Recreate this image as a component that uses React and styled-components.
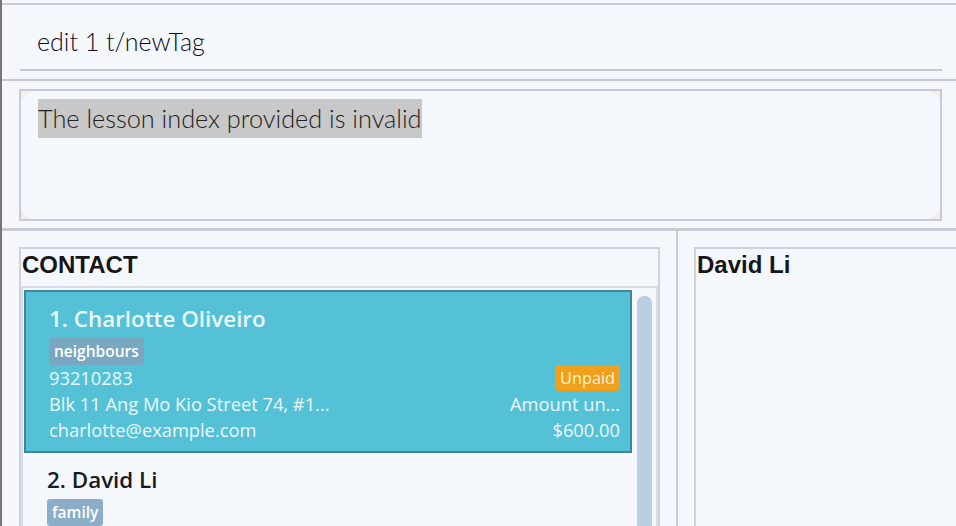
import styled, { createGlobalStyle } from 'styled-components';

const GlobalStyle = createGlobalStyle`
  html, body {
    margin: 0;
    padding: 0;
    background: #f4f8fc;
  }
  body {
    font-family: "Open Sans", "Noto Sans", sans-serif;
  }
`;

const Window = styled.div`
  width: 956px;
  height: 526px;
  box-sizing: border-box;
  overflow: hidden;
  display: flex;
  flex-direction: column;
  padding-top: 3px;
  background: #f4f8fc;
  border-left: 2px solid #767676;
`;

const CommandBar = styled.div`
  flex: none;
  height: 78px;
  box-sizing: border-box;
  border-top: 2px solid #c8cad6;
  border-bottom: 2px solid #c4c7d3;
  padding: 0 14px 0 18px;
`;

const CommandField = styled.div`
  height: 66px;
  box-sizing: border-box;
  padding: 21px 0 0 17px;
  border-bottom: 2px solid #c6c9d5;
  font-family: Lato, "Open Sans", sans-serif;
  font-weight: 300;
  font-size: 25px;
  line-height: 30px;
  color: #0c0c1c;
`;

const ResultBar = styled.div`
  flex: none;
  height: 150px;
  box-sizing: border-box;
  padding: 8px 14px 0 17px;
  border-bottom: 3px solid #c8cad6;
`;

const ResultBox = styled.div`
  height: 132px;
  box-sizing: border-box;
  border: 2px solid #c8cbd7;
  background: #efefef;
`;

const ResultArea = styled.div`
  height: 100%;
  box-sizing: border-box;
  border-radius: 14px;
  background: #f4f8fc;
  padding: 8px 17px;
`;

const Highlight = styled.span`
  display: inline-block;
  height: 39px;
  line-height: 39px;
  background: #c8c8c8;
  font-family: Lato, "Open Sans", sans-serif;
  font-weight: 300;
  font-size: 25.3px;
  color: #222;
`;

const Bottom = styled.div`
  flex: none;
  height: 330px;
  display: flex;
`;

const LeftPane = styled.div`
  width: 676px;
  flex: none;
  box-sizing: border-box;
  padding: 16px 16px 0 17px;
  border-right: 2px solid #c8cbd7;
`;

const RightPane = styled.div`
  flex: 1;
  overflow: hidden;
  padding: 16px 0 0 16px;
`;

const Panel = styled.div`
  box-sizing: border-box;
  height: 100%;
  width: ${(p) => p.$width || 'auto'};
  border: 2px solid #cfd2dd;
  border-bottom: none;
  display: flex;
  flex-direction: column;
`;

const PanelTitle = styled.div`
  flex: none;
  height: 37px;
  box-sizing: border-box;
  padding: 2px 0 0 1px;
  font-family: "Liberation Sans", Arial, sans-serif;
  font-weight: 700;
  font-size: 24px;
  line-height: 28px;
  color: #161616;
`;

const List = styled.div`
  flex: 1;
  display: flex;
  border: 2px solid #d8dbe4;
  border-bottom: none;
  padding: 2px 0 0 1px;
  overflow: hidden;
`;

const Cards = styled.div`
  flex: 1;
  display: flex;
  flex-direction: column;
`;

const ScrollThumb = styled.div`
  flex: none;
  width: 15px;
  margin: 6px 4px 0 5px;
  border-radius: 7px 7px 0 0;
  background: #bacfdf;
`;

const Card = styled.div`
  box-sizing: border-box;
  padding: 12px 10px 8px 23px;
  border: ${(p) => (p.$selected ? '2px solid #3f8599' : 'none')};
  background: ${(p) => (p.$selected ? '#55c1d6' : 'transparent')};
  color: ${(p) => (p.$selected ? '#eaf8fb' : '#1b1b1b')};
`;

const Name = styled.div`
  font-size: 22.4px;
  font-weight: 600;
  line-height: 30px;
`;

const Tag = styled.span`
  display: inline-block;
  margin-top: 4px;
  height: 27px;
  line-height: 27px;
  padding: 0 5px;
  border-radius: 3px;
  background: ${(p) => (p.$selected ? '#7aa7c0' : '#8badc7')};
  color: #fff;
  font-size: 15.5px;
  font-weight: 600;
`;

const Row = styled.div`
  display: flex;
  justify-content: space-between;
  align-items: center;
  height: 26px;
  font-size: 18.3px;
  line-height: 26px;
`;

const Badge = styled.span`
  height: 26px;
  line-height: 26px;
  padding: 0 5px;
  border-radius: 4px;
  background: #f0a01c;
  color: #fff3d6;
  font-size: 16.3px;
`;

export default function App() {
  return (
    <>
      <GlobalStyle />
      <Window>
        <CommandBar>
          <CommandField>edit 1 t/newTag</CommandField>
        </CommandBar>
        <ResultBar>
          <ResultBox>
            <ResultArea>
              <Highlight>The lesson index provided is invalid</Highlight>
            </ResultArea>
          </ResultBox>
        </ResultBar>
        <Bottom>
          <LeftPane>
            <Panel>
              <PanelTitle>CONTACT</PanelTitle>
              <List>
                <Cards>
                  <Card $selected>
                    <Name>1. Charlotte Oliveiro</Name>
                    <Tag $selected>neighbours</Tag>
                    <Row>
                      <span>93210283</span>
                      <Badge>Unpaid</Badge>
                    </Row>
                    <Row>
                      <span>Blk 11 Ang Mo Kio Street 74, #1...</span>
                      <span>Amount un...</span>
                    </Row>
                    <Row>
                      <span>charlotte@example.com</span>
                      <span>$600.00</span>
                    </Row>
                  </Card>
                  <Card>
                    <Name>2. David Li</Name>
                    <Tag>family</Tag>
                  </Card>
                </Cards>
                <ScrollThumb />
              </List>
            </Panel>
          </LeftPane>
          <RightPane>
            <Panel $width="400px">
              <PanelTitle>David Li</PanelTitle>
            </Panel>
          </RightPane>
        </Bottom>
      </Window>
    </>
  );
}
